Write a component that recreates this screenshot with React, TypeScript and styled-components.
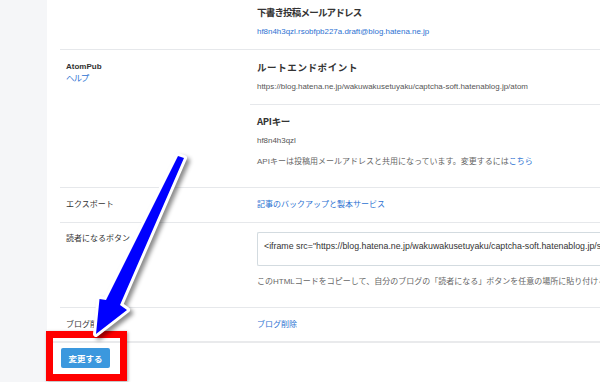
import React from "react";
import styled, { createGlobalStyle } from "styled-components";

const GlobalStyle = createGlobalStyle`
  html, body {
    margin: 0;
    padding: 0;
    background: #ffffff;
    overflow: hidden;
  }
  body {
    font-family: "Liberation Sans", "Noto Sans CJK JP", sans-serif;
    color: #333333;
  }
`;

const Page = styled.div`
  position: relative;
  display: flex;
  width: 600px;
  height: 382px;
  overflow: hidden;
`;

const Sidebar = styled.div`
  width: 47px;
  flex-shrink: 0;
  background: #f5f6f8;
`;

const Main = styled.div`
  flex: 1;
  display: flex;
  flex-direction: column;
  min-width: 0;
  background: #ffffff;
`;

const Panel = styled.div`
  margin-top: -5px;
  padding-left: 13px;
  border-bottom: 2px solid #e9eaec;
`;

const Row = styled.div<{ $first?: boolean }>`
  display: grid;
  grid-template-columns: 190px minmax(0, 1fr);
  border-top: ${({ $first }) => ($first ? "none" : "1px solid #e6e8eb")};
`;

const Label = styled.div<{ $top?: number }>`
  padding: ${({ $top = 10 }) => $top}px 0 0 6px;
  font-size: 8px;
  line-height: 14px;
  color: #333;
  white-space: nowrap;
`;

const LabelTitle = styled.div`
  font-size: 8px;
  line-height: 11px;
  font-weight: 700;
  color: #333;
`;

const LabelLink = styled.a`
  display: block;
  font-family: "Noto Sans CJK JP", sans-serif;
  font-feature-settings: "palt";
  font-size: 8.5px;
  line-height: 11px;
  letter-spacing: -0.6px;
  color: #2d72d2;
  text-decoration: none;
`;

const ValueCell = styled.div`
  display: flex;
  flex-direction: column;
  min-width: 0;
`;

const Item = styled.div<{ $top?: number; $bottom?: number; $divided?: boolean }>`
  padding: ${({ $top = 10 }) => $top}px 0 ${({ $bottom = 10 }) => $bottom}px 7px;
  border-top: ${({ $divided }) => ($divided ? "1px solid #e6e8eb" : "none")};
  font-size: 8px;
  line-height: 14px;
  white-space: nowrap;
  overflow: hidden;
`;

const ItemTitle = styled.div<{ $spacing?: number }>`
  font-family: "Noto Sans CJK JP", sans-serif;
  font-size: 9.5px;
  line-height: 14px;
  font-weight: 700;
  letter-spacing: ${({ $spacing = 0 }) => $spacing}px;
  color: #333;
`;

const SmallText = styled.div<{ $link?: boolean }>`
  margin-top: 6px;
  font-size: 7.95px;
  line-height: 14px;
  color: ${({ $link }) => ($link ? "#2d72d2" : "#555")};
`;

const Note = styled.div<{ $top?: number; $bottom?: number }>`
  margin: ${({ $top = 7 }) => $top}px 0 ${({ $bottom = 0 }) => $bottom}px;
  font-size: 8px;
  line-height: 14px;
  color: #666;
`;

const Link = styled.a`
  font-size: 8px;
  line-height: 14px;
  color: #2d72d2;
  text-decoration: none;
`;

const CodeBox = styled.div`
  margin-right: -40px;
  padding: 6px 6px 0;
  box-sizing: border-box;
  height: 34px;
  border: 1px solid #d3dbe0;
  border-right: none;
  border-radius: 2px 0 0 2px;
  font-size: 8.8px;
  line-height: 14px;
  color: #333;
  white-space: nowrap;
  overflow: hidden;
`;

const Footer = styled.div`
  padding: 5px 0 0 14px;
`;

const SubmitButton = styled.button`
  width: 49px;
  height: 20px;
  padding: 0;
  border: none;
  border-radius: 2px;
  background: #3b98de;
  color: #ffffff;
  font-family: "Noto Sans CJK JP", sans-serif;
  font-size: 8.5px;
  font-weight: 700;
`;

const Highlight = styled.div`
  position: absolute;
  left: 46px;
  top: 331px;
  width: 81px;
  height: 50px;
  box-sizing: border-box;
  border: 7px solid #ff0000;
  box-shadow: 1px 1px 3px rgba(0, 0, 0, 0.35);
  pointer-events: none;
`;

const ArrowLayer = styled.svg`
  position: absolute;
  left: 0;
  top: 0;
  width: 600px;
  height: 382px;
  pointer-events: none;
  filter: drop-shadow(3px 3px 2px rgba(0, 0, 0, 0.45));
`;

const arrowPoints =
  "178,156 184,158 120,305 127,310 96,334 99.5,299 106,300";

export default function App() {
  return (
    <>
      <GlobalStyle />
      <Page>
        <Sidebar />
        <Main>
          <Panel>
            <Row $first>
              <Label />
              <ValueCell>
                <Item>
                  <ItemTitle $spacing={-0.8}>下書き投稿メールアドレス</ItemTitle>
                  <SmallText $link>hf8n4h3qzl.rsobfpb227a.draft@blog.hatena.ne.jp</SmallText>
                </Item>
              </ValueCell>
            </Row>
            <Row>
              <Label $top={11}>
                <LabelTitle>AtomPub</LabelTitle>
                <LabelLink>ヘルプ</LabelLink>
              </Label>
              <ValueCell>
                <Item>
                  <ItemTitle $spacing={0.6}>ルートエンドポイント</ItemTitle>
                  <SmallText>
                    https://blog.hatena.ne.jp/wakuwakusetuyaku/captcha-soft.hatenablog.jp/atom
                  </SmallText>
                </Item>
                <Item $divided $top={9}>
                  <ItemTitle $spacing={-0.3}>APIキー</ItemTitle>
                  <SmallText>hf8n4h3qzl</SmallText>
                  <Note $bottom={8}>
                    APIキーは投稿用メールアドレスと共用になっています。変更するには
                    <Link>こちら</Link>
                  </Note>
                </Item>
              </ValueCell>
            </Row>
            <Row>
              <Label>エクスポート</Label>
              <ValueCell>
                <Item>
                  <Link>記事のバックアップと製本サービス</Link>
                </Item>
              </ValueCell>
            </Row>
            <Row>
              <Label $top={9}>読者になるボタン</Label>
              <ValueCell>
                <Item $top={9} $bottom={18}>
                  <CodeBox>
                    &lt;iframe src="https://blog.hatena.ne.jp/wakuwakusetuyaku/captcha-soft.hatenablog.jp/subscribe/iframe" allowtransparency="true"&gt;
                  </CodeBox>
                  <Note $top={9}>
                    このHTMLコードをコピーして、自分のブログの「読者になる」ボタンを任意の場所に貼り付けることができます。
                  </Note>
                </Item>
              </ValueCell>
            </Row>
            <Row>
              <Label>ブログ削除</Label>
              <ValueCell>
                <Item $bottom={9}>
                  <Link>ブログ削除</Link>
                </Item>
              </ValueCell>
            </Row>
          </Panel>
          <Footer>
            <SubmitButton>変更する</SubmitButton>
          </Footer>
        </Main>
        <Highlight />
        <ArrowLayer viewBox="0 0 600 382">
          <polygon
            points={arrowPoints}
            fill="#ffffff"
            stroke="#ffffff"
            strokeWidth={6}
            strokeLinejoin="round"
          />
          <polygon points={arrowPoints} fill="#0000ff" />
        </ArrowLayer>
      </Page>
    </>
  );
}
